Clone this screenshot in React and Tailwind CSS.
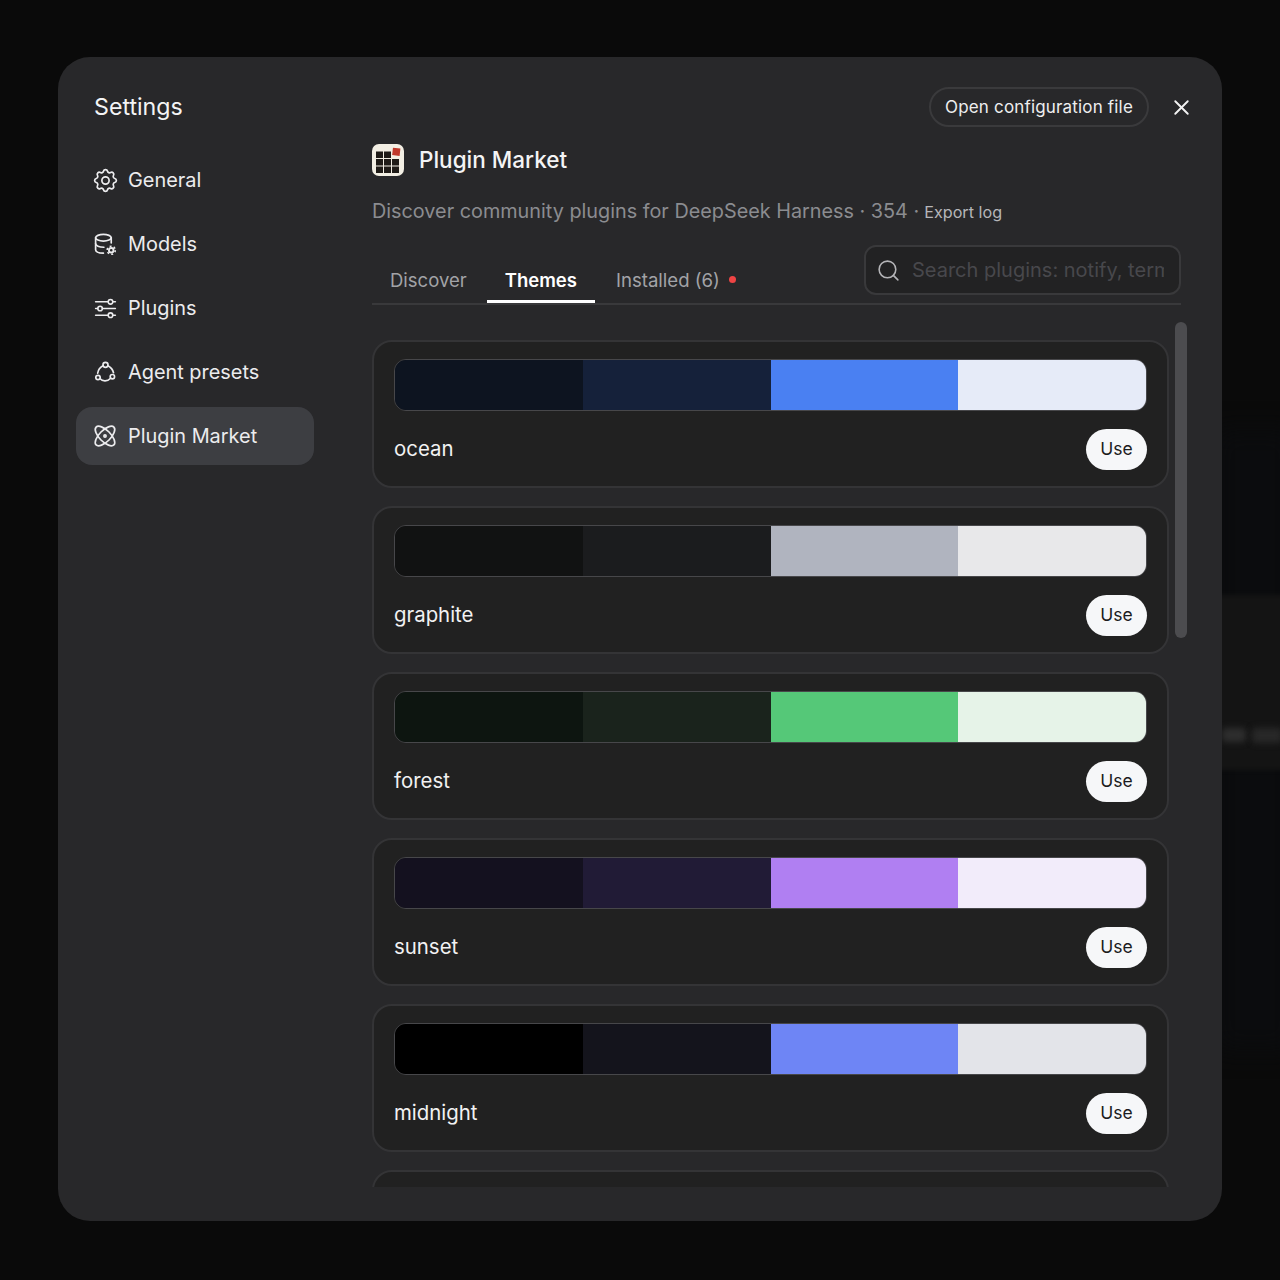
import { Atom, X, Search } from "lucide-react";
import { TbSettings } from "react-icons/tb";

const font = { fontFamily: "Inter, 'Noto Sans', sans-serif" };

const ModelsIcon = () => (
  <svg viewBox="0 0 24 24" className="w-[25px] h-[25px] shrink-0" fill="none" stroke="currentColor" strokeWidth="1.6" strokeLinecap="round">
    <ellipse cx="10" cy="5.5" rx="7.5" ry="3.2" />
    <path d="M2.5 5.5V17C2.5 18.8 5.5 20.2 10 20.3" />
    <path d="M17.5 5.5V10.5" />
    <path d="M2.5 11.3C2.5 13.1 5.8 14.6 10.5 14.6" />
    <circle cx="17.5" cy="17.5" r="2.2" strokeWidth="1.8" />
    <circle cx="17.5" cy="17.5" r="3.9" strokeWidth="1.5" strokeLinecap="butt" strokeDasharray="1.9 2.18" />
  </svg>
);

// sliders with three lines and small round knobs
const SlidersIcon = () => (
  <svg viewBox="0 0 24 24" className="w-[25px] h-[25px] shrink-0" fill="none" stroke="currentColor" strokeWidth="1.5" strokeLinecap="round">
    <path d="M2.5 5.6H14.5M19 5.6H21.5" />
    <circle cx="16.8" cy="5.6" r="2.2" />
    <path d="M2.5 12H4.5M9 12H21.5" />
    <circle cx="6.8" cy="12" r="2.2" />
    <path d="M2.5 18.4H14.5M19 18.4H21.5" />
    <circle cx="16.8" cy="18.4" r="2.2" />
  </svg>
);

const PresetsIcon = () => (
  <svg viewBox="0 0 24 24" className="w-[25px] h-[25px] shrink-0" fill="none" stroke="currentColor" strokeWidth="1.6" strokeLinecap="round">
    <circle cx="12" cy="4.6" r="2.4" />
    <circle cx="4.8" cy="16.8" r="2.1" />
    <circle cx="18.6" cy="16" r="2.1" />
    <path d="M9.6 5.6C7 7 5 9.5 4.5 12.6" />
    <path d="M14.4 5.6C17 7 19 9.5 19.7 12.2" />
    <path d="M6.8 18C9 20.6 14 20.8 16.9 17.5" />
  </svg>
);

const logoCells = [
  [4, 7.5], [12, 7.5],
  [4, 15], [12, 15], [20, 15],
  [4, 22.5], [12, 22.5], [20, 22.5],
];

const MarketLogo = () => (
  <svg viewBox="0 0 32 32" className="w-8 h-8 shrink-0">
    <rect width="32" height="32" rx="7" fill="#f3efe4" />
    {logoCells.map(([x, y]) => (
      <rect key={`${x}-${y}`} x={x} y={y} width="7" height="6.5" fill="#1f1b17" />
    ))}
    <rect x="20.5" y="4" width="7.5" height="7.5" fill="#c0392b" transform="rotate(6 24 8)" />
  </svg>
);

const navItems = [
  { label: "General", icon: <TbSettings className="w-[29px] h-[29px] shrink-0" strokeWidth={1.4} /> },
  { label: "Models", icon: <ModelsIcon /> },
  { label: "Plugins", icon: <SlidersIcon /> },
  { label: "Agent presets", icon: <PresetsIcon /> },
  { label: "Plugin Market", icon: <Atom className="w-[26px] h-[26px] shrink-0" strokeWidth={1.6} />, active: true },
];

const themes = [
  { name: "ocean", colors: ["bg-[#0d1420]", "bg-[#15213a]", "bg-[#4a80f2]", "bg-[#e6ebf8]"] },
  { name: "graphite", colors: ["bg-[#111212]", "bg-[#1b1c1e]", "bg-[#b0b4bf]", "bg-[#e8e8ea]"] },
  { name: "forest", colors: ["bg-[#0d1510]", "bg-[#1a231c]", "bg-[#55c878]", "bg-[#e6f3e8]"] },
  { name: "sunset", colors: ["bg-[#14111f]", "bg-[#211b36]", "bg-[#b07ff2]", "bg-[#f2ecfa]"] },
  { name: "midnight", colors: ["bg-[#000000]", "bg-[#14141c]", "bg-[#6e85f5]", "bg-[#e3e4e9]"] },
];

const ThemeCard = ({ theme }) => (
  <div className="w-[797px] shrink-0 h-[148px] rounded-[20px] border-2 border-[#343436] bg-[#212121] px-5 pt-[17px]">
    <div className="flex h-[52px] rounded-xl border border-[#47474a] overflow-hidden">
      {theme.colors.map((c) => (
        <div key={c} className={`flex-1 ${c}`} />
      ))}
    </div>
    <div className="flex items-center justify-between mt-[18px]">
      <span className="text-[20.4px] text-[#f2f2f3] mb-px">{theme.name}</span>
      <button className="w-[61px] h-[41px] rounded-full bg-[#f6f7f9] text-[#1c1c1e] text-[17.5px]">Use</button>
    </div>
  </div>
);

export default function App() {
  return (
    <div className="relative overflow-hidden min-h-[1280px] bg-[#0a0a0a] pt-[57px] pl-[58px]" style={font}>
      {/* blurred page behind the dialog */}
      <div className="absolute left-[1215px] top-[430px] w-[80px] h-[620px] bg-[#0b0c0e] blur-md" />
      <div className="absolute left-[1215px] top-[595px] w-[80px] h-[175px] bg-[#141414] blur-[2px]" />
      <div className="absolute left-[1222px] top-[728px] w-[24px] h-[14px] rounded bg-[#2e2e2e] blur-[3px]" />
      <div className="absolute left-[1252px] top-[728px] w-[30px] h-[15px] rounded bg-[#282828] blur-[3px]" />

      <div className="relative flex w-[1164px] h-[1164px] rounded-[32px] bg-[#28282a] overflow-hidden">
        {/* Sidebar */}
        <aside className="w-[314px] shrink-0 pl-[18px] pr-[58px] pt-[33px]">
          <h1 className="pl-[18px] text-[23.2px] leading-[34px] text-[#f4f4f5] font-normal">Settings</h1>
          <nav className="mt-[27px] flex flex-col gap-[6px]">
            {navItems.map((item) => (
              <div
                key={item.label}
                className={`flex items-center h-[58px] pl-[17px] rounded-2xl text-[19.9px] text-[#ececee] ${item.active ? "bg-[#3d3e42]" : ""}`}
              >
                <span className="w-[24px] flex items-center justify-center">{item.icon}</span>
                <span className="ml-[11px] mt-px">{item.label}</span>
              </div>
            ))}
          </nav>
        </aside>

        {/* Main */}
        <main className="flex-1 min-w-0 flex flex-col pr-[41px] pt-[30px]">
          <div className="flex items-center justify-end h-10">
            <button className="h-10 px-[14px] pt-[2px] rounded-full border-2 border-[#3a3a3c] text-[17px] tracking-[0.01em] text-[#eeeeef]">
              Open configuration file
            </button>
            <button className="w-8 h-8 ml-4 -mr-4 flex items-center justify-center text-[#f2f2f3]">
              <X className="w-[25px] h-[25px]" strokeWidth={1.8} />
            </button>
          </div>

          <div className="flex items-center gap-[15px] mt-4 h-[33px]">
            <MarketLogo />
            <h2 className="text-[22.5px] font-medium text-[#f4f4f5] mt-px">Plugin Market</h2>
          </div>

          <p className="mt-[17px] flex items-baseline text-[19.82px] leading-[36px] text-[#8b8c90]">
            Discover community plugins for DeepSeek Harness · 354 ·
            <span className="ml-[5px] text-[16.2px] text-[#b6b6b9]">Export log</span>
          </p>

          <div className="flex items-end justify-between border-b-2 border-[#39393b] h-[75px]">
            <div className="flex gap-[2px]">
              <div className="px-[18px] pt-[2px] h-[44px] border-b-[3px] border-transparent flex items-center text-[18.5px] text-[#a2a3a7]">Discover</div>
              <div className="px-[18px] pt-[2px] h-[44px] border-b-[3px] border-white flex items-center text-[18.5px] font-semibold text-white">Themes</div>
              <div className="ml-px px-[18px] pt-[2px] h-[44px] border-b-[3px] border-transparent flex items-center text-[18.6px] text-[#a2a3a7]">
                Installed (6)
                <span className="ml-[9px] -mt-[3px] w-[7px] h-[7px] rounded-full bg-[#ef4444]" />
              </div>
            </div>
            <div className="w-[317px] h-[50px] mb-[8px] flex items-center gap-[11px] pl-[10px] pr-[15px] rounded-xl border-2 border-[#39393b] bg-[#222223]">
              <Search className="w-[25px] h-[25px] shrink-0 text-[#b4b4b7]" strokeWidth={1.5} />
              <input
                placeholder="Search plugins: notify, terminal, theme"
                className="flex-1 min-w-0 bg-transparent outline-none text-[20px] placeholder:text-[#48484c]"
              />
            </div>
          </div>

          {/* Theme list */}
          <div className="relative h-[865px] -mr-[6px] mt-[17px] pt-[18px] overflow-hidden flex flex-col gap-[18px]">
            {themes.map((t) => (
              <ThemeCard key={t.name} theme={t} />
            ))}
            {/* next card, only its top edge is visible */}
            <div className="w-[797px] shrink-0 h-[148px] rounded-[20px] border-2 border-[#343436] bg-[#212121]" />
            <div className="absolute right-0 top-0 w-3 h-[316px] rounded-full bg-[#4c4c4f]" />
          </div>
        </main>
      </div>
    </div>
  );
}
